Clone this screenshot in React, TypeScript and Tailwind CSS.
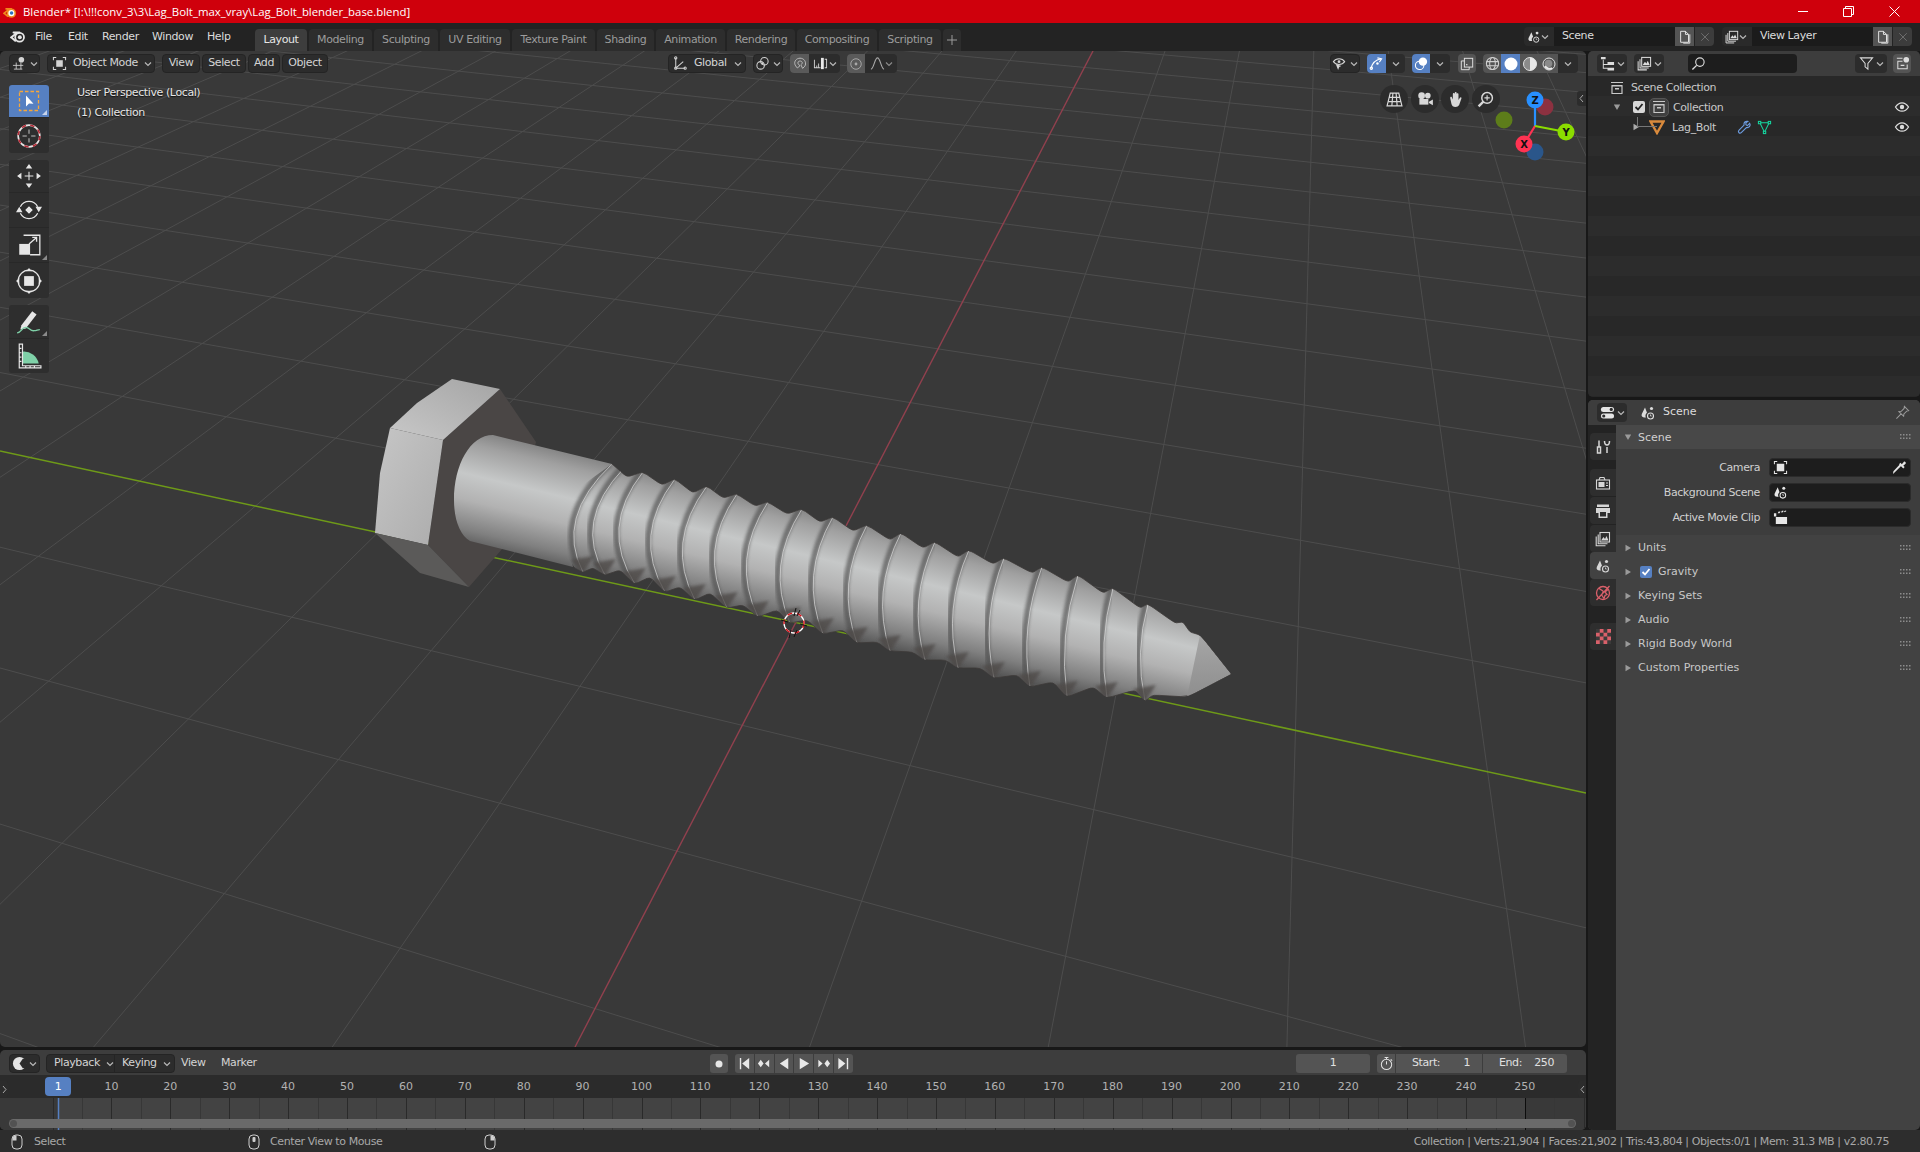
import React from "react";

type IconProps = { s?: number; className?: string; children?: React.ReactNode };

const Ic = ({ s = 16, className = "", children }: IconProps) => (
  <svg viewBox="0 0 16 16" width={s} height={s} fill="none" stroke="currentColor" strokeWidth={1.1} className={`shrink-0 ${className}`}>
    {children}
  </svg>
);

const Chev = ({ className = "text-[#b8b8b8]" }: { className?: string }) => (
  <svg viewBox="0 0 8 8" width={8} height={8} fill="none" stroke="currentColor" strokeWidth={1.2} className={`shrink-0 ${className}`}>
    <path d="M1 2.5 4 5.5 7 2.5" />
  </svg>
);

const Tri = ({ down = false, className = "text-[#9a9a9a]" }: { down?: boolean; className?: string }) => (
  <svg viewBox="0 0 8 8" width={8} height={8} fill="currentColor" className={`shrink-0 ${className}`}>
    {down ? <path d="M.8 1.5h6.4L4 7z" /> : <path d="M1.5 .8v6.4L7 4z" />}
  </svg>
);

const Logo = ({ s = 16, orange = false }: { s?: number; orange?: boolean }) => (
  <svg viewBox="0 0 16 16" width={s} height={s} fill="none" className="shrink-0">
    <path d="M1 9.5 6.5 5.2M3.5 4.5h6M1.5 9.5l3.7 3.3" stroke={orange ? "#f08a1d" : "#e6e6e6"} strokeWidth={1.9} strokeLinecap="round" />
    <circle cx={9.6} cy={9.3} r={4.4} stroke={orange ? "#f08a1d" : "#e6e6e6"} strokeWidth={1.8} fill={orange ? "#fff" : "none"} />
    <circle cx={9.8} cy={9.2} r={2} fill={orange ? "#2a6fc0" : "#e6e6e6"} />
  </svg>
);

const SceneIco = ({ s = 16 }: { s?: number }) => (
  <Ic s={s}>
    <path d="M5 2.5 1.8 9c-.8 2 .6 3.6 2.7 3.6.6 0 1 0 1.4-.2C5 11 5.4 9 7 7.8z" fill="currentColor" stroke="none" />
    <circle cx={11.5} cy={3.5} r={1.6} fill="currentColor" stroke="none" />
    <circle cx={10.5} cy={11} r={3} />
    <path d="M10.5 9.5V11h1.2" strokeWidth={0.8} />
  </Ic>
);

const LayerIco = ({ s = 16 }: { s?: number }) => (
  <Ic s={s}>
    <rect x={5} y={1.5} width={9.5} height={9.5} fill="none" />
    <path d="M6 9.5 8.5 6l1.5 2 1.5-3 2 4.5z" fill="currentColor" stroke="none" />
    <path d="M3.2 3.5v9.3h9.3M1.2 5.5v9.3h9.3" />
  </Ic>
);

const Collection = () => (
  <Ic>
    <path d="M2 2.5h12M3 6v7.5h10V6H3zM2.5 5.500h11" strokeWidth={1.2} />
    <rect x={6} y={8} width={4} height={1.5} fill="currentColor" stroke="none" />
  </Ic>
);

const Eye = () => (
  <Ic className="text-[#dcdcdc]">
    <path d="M1.5 8C3.5 4.8 5.8 3.8 8 3.8s4.500 1 6.500 4.200c-2 3.200-4.300 4.200-6.500 4.200S3.500 11.200 1.500 8z" strokeWidth={1.3} />
    <circle cx={8} cy={8} r={2.2} fill="currentColor" stroke="none" />
  </Ic>
);

const Grip = () => (
  <svg width={11} height={6} viewBox="0 0 11 6" fill="#8c8c8c" className="shrink-0">
    {[0, 3, 6, 9].map((x) => (
      <g key={x}>
        <rect x={x} y={0} width={1.5} height={1.5} />
        <rect x={x} y={3.5} width={1.5} height={1.5} />
      </g>
    ))}
  </svg>
);

const Mouse = ({ part }: { part: "l" | "m" | "r" }) => (
  <svg viewBox="0 0 12 16" width={12} height={16} fill="none" stroke="#cfcfcf" strokeWidth={1} className="shrink-0">
    <rect x={1} y={1} width={10} height={14} rx={4} />
    {part === "l" && <path d="M1.5 6.5V4a3 3 0 0 1 3-2.500h1v5z" fill="#cfcfcf" stroke="none" />}
    {part === "m" && <rect x={4.5} y={3} width={3} height={5} rx={1} fill="#cfcfcf" stroke="none" />}
    {part === "r" && <path d="M10.5 6.5V4a3 3 0 0 0-3-2.500h-1v5z" fill="#cfcfcf" stroke="none" />}
  </svg>
);

const menu: [string, string][] = [
  ["File", "w-[33px]"],
  ["Edit", "w-[34px]"],
  ["Render", "w-[50px]"],
  ["Window", "w-[55px]"],
  ["Help", "w-[48px]"],
];
const tabs: [string, string][] = [
  ["Layout", "w-[52px]"],
  ["Modeling", "w-[63px]"],
  ["Sculpting", "w-[64px]"],
  ["UV Editing", "w-[70px]"],
  ["Texture Paint", "w-[83px]"],
  ["Shading", "w-[57px]"],
  ["Animation", "w-[69px]"],
  ["Rendering", "w-[68px]"],
  ["Compositing", "w-[80px]"],
  ["Scripting", "w-[62px]"],
];

function TopBar() {
  return (
    <div className="h-[28px] bg-[#232323] flex items-start">
      <div className="w-[34px] h-[26px] flex items-center justify-center pl-[1px]">
        <Logo s={16} />
      </div>
      <div className="h-[26px] flex items-center pt-[2px] text-[#dcdcdc] ml-[1px] w-[220px]">
        {menu.map(([m, w]) => (
          <span key={m} className={w}>{m}</span>
        ))}
      </div>
      <div className="flex gap-[2px] mt-[6px] h-[22px]">
        {tabs.map(([t, w], i) => (
          <div key={t} className={`${w} h-[22px] rounded-t-[4px] flex items-center justify-center ${i === 0 ? "bg-[#3d3d3d] text-[#e6e6e6]" : "bg-[#2d2d2d] text-[#9c9c9c]"}`}>
            {t}
          </div>
        ))}
        <div className="w-[18px] h-[22px] rounded-t-[4px] bg-[#2d2d2d] text-[#9c9c9c] flex items-center justify-center">
          <svg width={10} height={10} viewBox="0 0 10 10" stroke="currentColor"><path d="M5 0v10M0 5h10" /></svg>
        </div>
      </div>
      <div className="ml-[563px] mt-[4px] flex h-[19px]">
        <div className="w-[30px] bg-[#2a2a2a] rounded-l-[4px] flex items-center pl-[3px] text-[#dcdcdc]">
          <SceneIco s={14} />
          <Chev />
        </div>
        <div className="w-[121px] bg-[#1b1b1b] text-[#dcdcdc] flex items-center pl-[8px]">Scene</div>
        <div className="w-[19px] bg-[#545454] flex items-center justify-center text-[#e6e6e6]">
          <Ic s={14}><path d="M3 1.5h5.500L12 5v9H3zM8.500 1.5V5H12M13.5 5v10H6" /></Ic>
        </div>
        <div className="w-[19px] ml-[1px] bg-[#3c3c3c] rounded-r-[4px] flex items-center justify-center text-[#777]">
          <Ic s={12}><path d="M3 3l10 10M13 3 3 13" /></Ic>
        </div>
      </div>
      <div className="ml-[8px] mt-[4px] flex h-[19px]">
        <div className="w-[30px] bg-[#2a2a2a] rounded-l-[4px] flex items-center pl-[3px] text-[#dcdcdc]">
          <LayerIco s={14} />
          <Chev />
        </div>
        <div className="w-[121px] bg-[#1b1b1b] text-[#dcdcdc] flex items-center pl-[8px]">View Layer</div>
        <div className="w-[19px] bg-[#545454] flex items-center justify-center text-[#e6e6e6]">
          <Ic s={14}><path d="M3 1.5h5.500L12 5v9H3zM8.500 1.5V5H12M13.5 5v10H6" /></Ic>
        </div>
        <div className="w-[19px] ml-[1px] bg-[#3c3c3c] rounded-r-[4px] flex items-center justify-center text-[#777]">
          <Ic s={12}><path d="M3 3l10 10M13 3 3 13" /></Ic>
        </div>
      </div>
    </div>
  );
}

const VP1 = { x: 1326, y: -400 };
const VP2 = { x: -3947, y: -400 };
const REF_Y = 1043;

// the ground grid runs off two vanishing points
function gridLines() {
  const out: string[] = [];
  for (let k = -22; k <= 10; k++) {
    if (k === 0) continue;
    const bx = 573 + 238 * k;
    const t = (1200 - VP1.y) / (REF_Y - VP1.y);
    const tTop = (0 - VP1.y) / (REF_Y - VP1.y);
    out.push(`M${VP1.x + (bx - VP1.x) * tTop} 0L${VP1.x + (bx - VP1.x) * t} 1200`);
  }
  for (let j = -5; j <= 24; j++) {
    if (j === 0) continue;
    const bx = 2746 + 680 * j;
    const slope = (REF_Y - VP2.y) / (bx - VP2.x);
    out.push(`M0 ${VP2.y + slope * (0 - VP2.x)}L1600 ${VP2.y + slope * (1600 - VP2.x)}`);
  }
  return out.join("");
}

const profile: number[][] = [
  [612, 464], [627, 477], [643, 472], [662, 485], [675, 479], [693, 493], [707, 486], [723, 498], [737, 494], [755, 506], [768, 502], [787, 514], [802, 509], [820, 522], [833, 517], [853, 531], [867, 525], [890, 540], [901, 533], [923, 548], [935, 542], [958, 557], [969, 550], [993, 564], [1004, 558], [1032, 573], [1042, 567], [1068, 582], [1078, 575], [1103, 593], [1113, 588], [1140, 608], [1148, 604], [1175, 623], [1183, 622], [1190, 632], [1200, 635], [1231, 674],
  [1187, 697], [1153, 695], [1145, 701], [1135, 690], [1107, 698], [1093, 687], [1067, 697], [1053, 682], [1030, 687], [1017, 675], [994, 678], [980, 668], [958, 668], [945, 660], [925, 660], [912, 652], [890, 651], [877, 642], [857, 643], [843, 630], [823, 634], [807, 620], [790, 623], [777, 610], [758, 617], [743, 605], [727, 608], [710, 593], [695, 600], [680, 587], [665, 592], [650, 577], [635, 584], [620, 570], [605, 575], [593, 568], [583, 572], [573, 567], [545, 512],
];

// round every corner of the outline, thread tips stay narrow
function roundedOutline(pts: number[][], f = 0.2) {
  let d = `M${pts[0][0]} ${pts[0][1]}`;
  for (let i = 1; i < pts.length - 1; i++) {
    const [x, y] = pts[i];
    const [px, py] = pts[i - 1];
    const [nx, ny] = pts[i + 1];
    const ff = x === 1231 ? 0.02 : f;
    d += `L${x + (px - x) * ff} ${y + (py - y) * ff}Q${x} ${y} ${x + (nx - x) * ff} ${y + (ny - y) * ff}`;
  }
  return `${d}L${pts[pts.length - 1][0]} ${pts[pts.length - 1][1]}Z`;
}

const outline = roundedOutline(profile);

const threads = [
  [612, 464, 583, 572],
  [624, 468, 605, 575],
  [643, 472, 635, 584],
  [675, 479, 665, 592],
  [707, 486, 695, 600],
  [737, 494, 727, 608],
  [768, 502, 758, 617],
  [802, 509, 790, 623],
  [833, 517, 823, 634],
  [867, 525, 857, 643],
  [901, 533, 890, 651],
  [935, 542, 925, 660],
  [969, 550, 958, 668],
  [1004, 558, 994, 678],
  [1042, 567, 1030, 687],
  [1078, 575, 1067, 697],
  [1113, 588, 1107, 698],
  [1148, 604, 1145, 701],
];

function threadPath(t: number[], shift = 0) {
  const mx = (t[0] + t[2]) / 2;
  const my = (t[1] + t[3]) / 2;
  const bulge = Math.max(12, 40 - (mx - 640) * 0.06);
  return `M${t[0] + shift} ${t[1]}Q${mx - bulge + shift} ${my} ${t[2] + shift} ${t[3]}`;
}

function Scene() {
  return (
    <svg viewBox="0 0 1586 996" width={1586} height={996} className="absolute inset-0">
      <g transform="translate(0 -51)">
        <defs>
          <linearGradient id="metal" gradientUnits="userSpaceOnUse" x1={613.5} y1={463.6} x2={586.5} y2={576.4}>
            <stop offset={0} stopColor="#858585" />
            <stop offset={0.12} stopColor="#a0a0a0" />
            <stop offset={0.38} stopColor="#c6c8c8" />
            <stop offset={0.6} stopColor="#b2b2b2" />
            <stop offset={0.85} stopColor="#808080" />
            <stop offset={1} stopColor="#565656" />
          </linearGradient>
          <linearGradient id="headSide" x1={0} y1={0} x2={1} y2={1}>
            <stop offset={0} stopColor="#c6c6c6" />
            <stop offset={1} stopColor="#acacac" />
          </linearGradient>
          <linearGradient id="headTop" x1={0} y1={1} x2={1} y2={0}>
            <stop offset={0} stopColor="#c8c8c8" />
            <stop offset={1} stopColor="#a4a4a4" />
          </linearGradient>
          <linearGradient id="cone" x1={0} y1={0} x2={0} y2={1}>
            <stop offset={0} stopColor="#a6a6a6" />
            <stop offset={1} stopColor="#8e8e8e" />
          </linearGradient>
          <clipPath id="shaftClip">
            <path d={outline} />
          </clipPath>
          <filter id="soft"><feGaussianBlur stdDeviation={1.5} /></filter>
        </defs>
        <path d={gridLines()} stroke="#4d4d4d" strokeWidth={1} fill="none" />
        <path d="M0 451L1586 793" stroke="#6e9a18" strokeWidth={1.5} />
        <path d="M575 1047L1093 51" stroke="#91404e" strokeWidth={1.4} />

        <polygon points="500,389 536,442 510,540 469,587 428,545 443,440" fill="#4a4645" />
        <polygon points="390,428 443,440 428,545 375,533 380,473" fill="url(#headSide)" />
        <polygon points="452,379 500,389 443,440 390,428 417,403" fill="url(#headTop)" />
        <polygon points="375,533 428,545 469,587 420,573" fill="#5b5a59" />

        <path d={outline} fill="url(#metal)" stroke="#3d3a39" strokeWidth={0.8} />
        <path d="M493 435C470 435 454 465 454 500C454 520 460 535 470 541L573 567C566 535 590 480 612 464Z" fill="url(#metal)" />
        <g clipPath="url(#shaftClip)">
          {threads.map((t) => (
            <g key={t[0]}>
              <path d={threadPath(t, -2.5)} stroke="#4c4c4c" strokeWidth={6} opacity={0.62} fill="none" filter="url(#soft)" />
              <path d={threadPath(t)} stroke="#e2e2e2" strokeWidth={1} opacity={0.65} fill="none" />
              <polygon points={`${t[2] - 12},${t[3] - 12} ${t[2]},${t[3] + 1} ${t[2] + 11},${t[3] - 16}`} fill="#4f4b4a" opacity={0.8} filter="url(#soft)" />
            </g>
          ))}
          <polygon points="1200,635 1231,674 1187,697" fill="url(#cone)" />
        </g>

        <g fill="none">
          <circle cx={794} cy={623} r={10} stroke="#fff" strokeWidth={1.3} />
          <circle cx={794} cy={623} r={10} stroke="#d8121a" strokeWidth={1.4} strokeDasharray="5 5" />
          <path d="M796 608l-2 8M800 610l-3 6M791 630l-2 8M797 630l-3 7M781 620l7 2M800 624l7 2" stroke="#111" strokeWidth={1} />
        </g>

        <circle cx={1545} cy={107} r={8.5} fill="#8c3140" />
        <circle cx={1504} cy={120} r={8.5} fill="#5d7d1a" />
        <circle cx={1535} cy={152} r={8.5} fill="#2a568a" />
        <path d="M1535 126V108" stroke="#2890ff" strokeWidth={2.2} />
        <path d="M1535 126L1524 144" stroke="#ff3352" strokeWidth={2.2} />
        <path d="M1535 126L1566 132" stroke="#8bdc00" strokeWidth={2.2} />
        <circle cx={1535} cy={100} r={8.5} fill="#2890ff" />
        <circle cx={1524} cy={144} r={8.5} fill="#ff3352" />
        <circle cx={1566} cy={132} r={8.5} fill="#8bdc00" />
        <g fontFamily="'DejaVu Sans', sans-serif" fontSize={10} fontWeight={700} fill="#111" textAnchor="middle">
          <text x={1535} y={104}>Z</text>
          <text x={1524} y={148}>X</text>
          <text x={1566} y={136}>Y</text>
        </g>
      </g>
    </svg>
  );
}

const HBtn = ({ w, children, className = "" }: { w: string; children: React.ReactNode; className?: string }) => (
  <div className={`${w} h-[19px] bg-[#2c2c2c] border border-[#242424] rounded-[4px] flex items-center justify-center gap-[3px] text-[#d4d4d4] whitespace-nowrap ${className}`}>
    {children}
  </div>
);

function ViewHeader() {
  return (
    <div className="flex h-[19px] mt-[3px] ml-[9px]">
      <HBtn w="w-[31px]">
        <Ic s={15}>
          <path d="M1 10h11M4.5 7v7M9.5 7v7M2 14h9" strokeWidth={0.9} />
          <circle cx={10} cy={4} r={3} fill="currentColor" stroke="none" />
        </Ic>
        <Chev />
      </HBtn>
      <HBtn w="w-[108px] ml-[7px]" className="!justify-start pl-[4px] gap-[6px]">
        <Ic s={15}>
          <rect x={4.5} y={4.5} width={7} height={7} fill="currentColor" stroke="none" />
          <path d="M1.5 4.500v-3h3M11.5 1.5h3v3M14.5 11.5v3h-3M4.5 14.5h-3v-3" />
        </Ic>
        <span className="flex-1">Object Mode</span>
        <Chev className="text-[#b8b8b8] mr-[3px]" />
      </HBtn>
      <HBtn w="w-[38px] ml-[7px]">View</HBtn>
      <HBtn w="w-[44px] ml-[2px]">Select</HBtn>
      <HBtn w="w-[32px] ml-[2px]">Add</HBtn>
      <HBtn w="w-[46px] ml-[2px]">Object</HBtn>

      <HBtn w="w-[78px] ml-[340px]" className="!justify-start pl-[3px] gap-[7px]">
        <Ic s={15}>
          <path d="M4 2v11h10M4 13l8-7" />
          <circle cx={4} cy={2} r={1.2} /><circle cx={14} cy={13} r={1.2} /><circle cx={4} cy={13} r={1.2} />
        </Ic>
        <span className="flex-1">Global</span>
        <Chev className="text-[#b8b8b8] mr-[3px]" />
      </HBtn>
      <HBtn w="w-[30px] ml-[7px]">
        <Ic s={15}>
          <circle cx={6} cy={10} r={4} />
          <circle cx={10} cy={5.5} r={4} />
          <circle cx={8} cy={8} r={1.2} fill="currentColor" stroke="none" />
        </Ic>
        <Chev />
      </HBtn>
      <div className="flex ml-[7px] h-[19px] w-[50px] bg-[#2c2c2c] rounded-[4px] overflow-hidden">
        <div className="w-[19px] bg-[#5a5a5a] flex items-center justify-center text-[#bdbdbd]">
          <Ic s={14}><path d="M11 13l2.500-2.500c2-3 .5-8-4-9-4-.8-8 2-7.500 6 .3 2 1.500 3.500 3 5L8 10C6 8.500 5 7 6 5.500c1.200-1.500 4-1 4.500.5.300 1.200-.300 2-1.500 3z" /></Ic>
        </div>
        <div className="flex-1 flex items-center justify-center gap-[1px] text-[#cfcfcf]">
          <svg viewBox="0 0 16 16" width={15} height={15} fill="currentColor" className="shrink-0">
            <path d="M1 4h1v9H1zM1 12h7v1H1zM3.500 10h1v2h-1zM5.500 8h1v4h-1z" />
            <rect x={8.5} y={2} width={3} height={12} fill="#e8e8e8" />
            <path d="M12.500 3H15v10h-2.500v-1H14V4h-1.500z" />
          </svg>
          <Chev />
        </div>
      </div>
      <div className="flex ml-[7px] h-[19px] w-[50px] bg-[#2c2c2c] rounded-[4px] overflow-hidden">
        <div className="w-[18px] bg-[#5a5a5a] flex items-center justify-center text-[#a8a8a8]">
          <Ic s={14}><circle cx={8} cy={8} r={6} /><circle cx={8} cy={8} r={1.6} fill="currentColor" stroke="none" /></Ic>
        </div>
        <div className="flex-1 flex items-center justify-center text-[#a8a8a8]">
          <Ic s={15}><path d="M1 14C4 14 5 2 8 2s4 12 7 12" /></Ic>
          <Chev className="text-[#8a8a8a]" />
        </div>
      </div>

      <HBtn w="w-[30px] ml-[433px]">
        <Ic s={15}>
          <path d="M1.500 6C3 3.800 5 3 7.500 3s4.500.8 6 3c-1.500 2.200-3.500 3-6 3s-4.500-.8-6-3z" />
          <circle cx={7.5} cy={6} r={1.5} fill="currentColor" stroke="none" />
          <path d="M4 8.500l6 2.200-2.300 1L6.500 15z" fill="currentColor" stroke="none" />
        </Ic>
        <Chev />
      </HBtn>
      <div className="flex ml-[7px] h-[19px] w-[38px] bg-[#2c2c2c] rounded-[4px] overflow-hidden">
        <div className="w-[19px] bg-[#5680c2] flex items-center justify-center text-white">
          <Ic s={15}><path d="M2 14C3 8 7 4 13 3M9 2l4.500 1L11 6.500" /><circle cx={2.5} cy={13} r={1.3} /><circle cx={9} cy={8} r={1.3} fill="currentColor" stroke="none" /></Ic>
        </div>
        <div className="flex-1 flex items-center justify-center"><Chev /></div>
      </div>
      <div className="flex ml-[7px] h-[19px] w-[38px] bg-[#2c2c2c] rounded-[4px] overflow-hidden">
        <div className="w-[18px] bg-[#5680c2] flex items-center justify-center text-white">
          <Ic s={15}><circle cx={6} cy={10} r={4.5} /><circle cx={9.5} cy={6} r={4.5} fill="currentColor" stroke="none" /></Ic>
        </div>
        <div className="flex-1 flex items-center justify-center"><Chev /></div>
      </div>
      <div className="ml-[8px] w-[18px] h-[19px] bg-[#545454] rounded-[4px] flex items-center justify-center text-[#e0e0e0]">
        <Ic s={14}><rect x={5} y={1.5} width={9.5} height={10} /><path d="M5 4.500H1.500v10h9V11.500" /><rect x={7} y={8} width={1.5} height={1.5} fill="currentColor" stroke="none" /></Ic>
      </div>
      <div className="flex ml-[7px] h-[19px] w-[95px] bg-[#2c2c2c] rounded-[4px] overflow-hidden">
        <div className="w-[18px] bg-[#545454] flex items-center justify-center text-[#d0d0d0]">
          <Ic s={15}><circle cx={8} cy={8} r={6.5} /><ellipse cx={8} cy={8} rx={3} ry={6.5} /><path d="M1.500 6h13M1.500 10.500h13" /></Ic>
        </div>
        <div className="w-[19px] bg-[#5680c2] flex items-center justify-center">
          <svg width={14} height={14} viewBox="0 0 14 14"><circle cx={7} cy={7} r={6.5} fill="#fff" /></svg>
        </div>
        <div className="w-[19px] bg-[#545454] flex items-center justify-center">
          <svg width={14} height={14} viewBox="0 0 14 14"><circle cx={7} cy={7} r={6.5} fill="#8a8a8a" stroke="#e0e0e0" /><path d="M7 .5a6.500 6.500 0 0 1 0 13z" fill="#e8e8e8" /></svg>
        </div>
        <div className="w-[19px] bg-[#545454] flex items-center justify-center">
          <svg width={14} height={14} viewBox="0 0 14 14" fill="none"><circle cx={7} cy={7} r={6} stroke="#e0e0e0" /><circle cx={6.5} cy={6.5} r={3.8} fill="#8a8a8a" /><path d="M3 9a5 5 0 0 0 7 2" stroke="#e8e8e8" strokeWidth={2} /></svg>
        </div>
        <div className="flex-1 flex items-center justify-center"><Chev /></div>
      </div>
    </div>
  );
}

const Tool = ({ children, active = false, corner = false, h = "h-[34px]" }: { children: React.ReactNode; active?: boolean; corner?: boolean; h?: string }) => (
  <div className={`relative ${h} flex items-center justify-center border-b border-[#282828] last:border-b-0 text-[#e4e4e4] ${active ? "bg-[#5680c2]" : ""}`}>
    {children}
    {corner && (
      <svg width={5} height={5} viewBox="0 0 5 5" className="absolute right-[2px] bottom-[2px]" fill={active ? "#c8d4ea" : "#8a8a8a"}>
        <path d="M5 0v5H0z" />
      </svg>
    )}
  </div>
);

function ToolBar() {
  return (
    <div className="w-[40px] flex flex-col gap-[7px]">
      <div className="bg-[#2e2e2e] rounded-[3px] overflow-hidden">
        <Tool active corner h="h-[33px]">
          <svg viewBox="0 0 24 24" width={24} height={24} fill="none">
            <rect x={2.5} y={2.5} width={19} height={19} stroke="#f5a63b" strokeWidth={1.3} strokeDasharray="3.500 2" />
            <path d="M9 6.500v11l3-3 4.500.2z" fill="#fff" />
          </svg>
        </Tool>
        <Tool h="h-[35px]">
          <svg viewBox="0 0 24 24" width={26} height={26} fill="none">
            <circle cx={12} cy={12} r={10} stroke="#e6e6e6" strokeWidth={1.5} />
            <circle cx={12} cy={12} r={10} stroke="#b42c38" strokeWidth={1.5} strokeDasharray="4 4" />
            <path d="M12 6v4M12 14v4M6 12h4M14 12h4" stroke="#bdbdbd" strokeWidth={1} />
          </svg>
        </Tool>
      </div>
      <div className="bg-[#2e2e2e] rounded-[3px] overflow-hidden">
        <Tool h="h-[33px]">
          <svg viewBox="0 0 24 24" width={26} height={26} fill="#e6e6e6" stroke="#e6e6e6">
            <path d="M12 1l3 4H9zM12 23l-3-4h6zM1 12l4-3v6zM23 12l-4 3V9z" stroke="none" />
            <path d="M12 8v8M8 12h8" strokeWidth={1} />
          </svg>
        </Tool>
        <Tool h="h-[35px]">
          <svg viewBox="0 0 24 24" width={26} height={26} fill="none" stroke="#e6e6e6" strokeWidth={1.2}>
            <path d="M4 9a9 9 0 0 1 16 0M20 15a9 9 0 0 1-16 0" />
            <path d="M12 8.500l3.500 3.500-3.500 3.500L8.500 12zM0 14l3-5 3 5zM18 9l3 5 3-5z" fill="#e6e6e6" stroke="none" />
          </svg>
        </Tool>
        <Tool corner h="h-[35px]">
          <svg viewBox="0 0 24 24" width={26} height={26} fill="none" stroke="#e6e6e6" strokeWidth={1.2}>
            <path d="M7 3h15v18h-9" />
            <rect x={3} y={11} width={10} height={10} fill="#e6e6e6" stroke="none" />
            <path d="M12 11l7-6M15 5h4v4" />
          </svg>
        </Tool>
        <Tool h="h-[35px]">
          <svg viewBox="0 0 24 24" width={26} height={26} fill="none" stroke="#e6e6e6" strokeWidth={1.2}>
            <circle cx={12} cy={12} r={10} />
            <rect x={7.5} y={7.5} width={9} height={9} fill="#e6e6e6" stroke="none" />
            <path d="M12 0l2.500 3h-5zM12 24l-2.500-3h5zM0 12l3-2.500v5zM24 12l-3 2.500v-5z" fill="#e6e6e6" stroke="none" />
          </svg>
        </Tool>
      </div>
      <div className="bg-[#2e2e2e] rounded-[3px] overflow-hidden">
        <Tool corner>
          <svg viewBox="0 0 24 24" width={26} height={26} fill="none">
            <path d="M5 15 15 2l4 3L9 18l-5 1z" fill="#e6e6e6" />
            <path d="M1 22c4 0 4-5 8-5s4 4 8 3c2 0 3-1 5-1" stroke="#7fd1a8" strokeWidth={1.3} />
          </svg>
        </Tool>
        <Tool>
          <svg viewBox="0 0 24 24" width={26} height={26} fill="none">
            <path d="M6 19V8a14 14 0 0 1 15 11z" fill="#7fd1a8" />
            <path d="M3 1h3v20h17v2H3zM3 5h2M3 9h2M3 13h2M3 17h2M9 21v2M13 21v2M17 21v2" stroke="#e6e6e6" strokeWidth={1.1} />
          </svg>
        </Tool>
      </div>
    </div>
  );
}

const NavCircle = ({ children }: { children: React.ReactNode }) => (
  <div className="w-[28px] h-[28px] rounded-full bg-[#2c2c2c] flex items-center justify-center text-[#d8d8d8]">{children}</div>
);

function NavButtons() {
  return (
    <div className="absolute left-[1380px] top-[34px] flex gap-[2.6px]">
      <NavCircle>
        <Ic s={17}><path d="M4 2h8l3 12H1zM6.500 2l-1 12M9.500 2l1 12M3 6h10M2 10h12" /></Ic>
      </NavCircle>
      <NavCircle>
        <Ic s={18}>
          <circle cx={5} cy={5} r={3} fill="currentColor" stroke="none" />
          <circle cx={10.5} cy={5} r={2.5} fill="currentColor" stroke="none" />
          <rect x={3} y={8} width={8} height={5} fill="currentColor" stroke="none" />
          <path d="M11.500 10.500 15 8.500v5l-3.500-2z" fill="currentColor" stroke="none" />
        </Ic>
      </NavCircle>
      <NavCircle>
        <svg viewBox="0 0 16 16" width={17} height={17} fill="currentColor">
          <path d="M3 6.500c0-1.500 1.600-1.500 1.800 0L5.500 8V3c0-1.400 1.700-1.400 1.800 0v4V2c0-1.400 1.800-1.400 1.800 0v5V3c0-1.300 1.700-1.300 1.700 0v5.500l1.200-2c.8-1.200 2-.4 1.500.7L11.500 13c-.8 1.600-2 2-3.500 2-2.200 0-3.300-1-3.800-2.800z" />
        </svg>
      </NavCircle>
      <NavCircle>
        <Ic s={17}>
          <circle cx={9.5} cy={6.5} r={5} strokeWidth={1.4} />
          <path d="M6 10 1.500 14.500" strokeWidth={2.2} />
          <path d="M9.500 4v5M7 6.500h5" />
        </Ic>
      </NavCircle>
    </div>
  );
}

function Viewport() {
  return (
    <div className="relative h-[996px] bg-[#393939] rounded-[5px] overflow-hidden">
      <Scene />
      <div className="relative">
        <ViewHeader />
        <div className="flex mt-[12px] ml-[9px]">
          <ToolBar />
          <div className="ml-[28px] -mt-[2px] text-[#e6e6e6] leading-[20px] [text-shadow:0_1px_1px_#111]">
            <div>User Perspective (Local)</div>
            <div>(1) Collection</div>
          </div>
        </div>
      </div>
      <NavButtons />
      <div className="absolute right-0 top-[40px] w-[9px] h-[15px] bg-[#2c2c2c] rounded-l-[3px] flex items-center justify-center text-[#a8a8a8]">
        <svg width={5} height={9} viewBox="0 0 5 9" fill="none" stroke="currentColor"><path d="M4 1 1 4.500 4 8" /></svg>
      </div>
    </div>
  );
}

const frames = Array.from({ length: 25 }, (_, i) => (i + 1) * 10);
const fx = (f: number) => 58.4 + (f - 1) * 5.89;

function Timeline() {
  const minor = Array.from({ length: 56 }, (_, i) => i * 5);
  return (
    <div className="relative flex-1 bg-[#3d3d3d] rounded-[5px] overflow-hidden">
      <div className="h-[25px] flex items-center pl-[9px] pt-[2px]">
        <div className="w-[31px] h-[19px] bg-[#2c2c2c] border border-[#242424] rounded-[4px] flex items-center justify-center gap-[2px] text-[#e4e4e4]">
          <svg width={15} height={15} viewBox="0 0 16 16"><circle cx={8} cy={8} r={7} fill="currentColor" /><path d="M8 8 11.500 3h4v10h-4z" fill="#2c2c2c" /></svg>
          <Chev />
        </div>
        <div className="ml-[6px] flex h-[19px] bg-[#2c2c2c] border border-[#242424] rounded-[4px] text-[#d4d4d4]">
          <div className="w-[68px] flex items-center pl-[7px] gap-[6px] border-r border-[#242424]">Playback <Chev /></div>
          <div className="w-[59px] flex items-center pl-[7px] gap-[6px]">Keying <Chev /></div>
        </div>
        <span className="ml-[6px] w-[40px] text-[#d4d4d4]">View</span>
        <span className="w-[37px] text-[#d4d4d4]">Marker</span>
        <div className="ml-[452px] w-[18px] h-[19px] bg-[#545454] rounded-[3px] flex items-center justify-center">
          <svg width={8} height={8} viewBox="0 0 8 8"><circle cx={4} cy={4} r={3.5} fill="#e6e6e6" /></svg>
        </div>
        <div className="ml-[7px] flex w-[118px] h-[19px] bg-[#545454] rounded-[3px] overflow-hidden divide-x divide-[#3d3d3d]">
          {[
            "M3 2h1.500v12H3zM13 2v12L5.500 8z",
            "M1 8l3-4 3 4-3 4zM8.500 8 13 4v8z",
            "M3 8l9-6v12z",
            "M4 2v12l10-6z",
            "M2.500 4v8l4.500-4zM12 4l3 4-3 4-3-4z",
            "M11.500 2H13v12h-1.500zM2.500 2v12L10 8z",
          ].map((d) => (
            <div key={d} className="flex-1 flex items-center justify-center">
              <svg viewBox="0 0 16 16" width={15} height={15} fill="#e8e8e8"><path d={d} /></svg>
            </div>
          ))}
        </div>
        <div className="ml-[443px] w-[74px] h-[19px] bg-[#545454] rounded-[3px] flex items-center justify-center text-[#e0e0e0]">1</div>
        <div className="ml-[7px] flex h-[19px] bg-[#545454] rounded-[3px] text-[#e0e0e0] divide-x divide-[#3d3d3d]">
          <div className="w-[19px] flex items-center justify-center">
            <Ic s={15}><circle cx={8} cy={9} r={5.5} /><path d="M8 9V5.500M6 1.500h4M8 1.500v2M12.500 3.500l1.500 1.500" /></Ic>
          </div>
          <div className="w-[87px] flex items-center justify-between pl-[16px] pr-[12px]"><span>Start:</span><span>1</span></div>
          <div className="w-[84px] flex items-center justify-between pl-[16px] pr-[13px]"><span>End:</span><span>250</span></div>
        </div>
      </div>
      <div className="h-[23px] bg-[#2b2b2b] flex items-center pt-[2px] pl-[82px] text-[#b2b2b2] tracking-normal">
        {frames.map((f) => (
          <span key={f} className="w-[58.9px] text-center shrink-0">{f}</span>
        ))}
      </div>
      <svg width={1586} height={32} className="block">
        <rect width={1586} height={32} fill="#393939" />
        <rect x={fx(1)} width={fx(250) - fx(1)} height={32} fill="#434343" />
        {minor.map((f) => (
          <path key={f} d={`M${Math.round(fx(f)) + 0.5} 0v32`} stroke={f % 10 === 0 ? "#2a2a2a" : "#373737"} />
        ))}
        <path d={`M${Math.round(fx(250)) + 0.5} 0v32`} stroke="#0d0d0d" />
        <path d="M58.500 0v32" stroke="#5680c2" strokeWidth={1.5} />
      </svg>
      <div className="absolute left-[45px] top-[27px] w-[26px] h-[19px] pt-[1px] bg-[#5680c2] rounded-[4px] text-white flex items-center justify-center">1</div>
      <div className="absolute left-[9px] right-[10px] bottom-[2px] h-[9px] rounded-full bg-[#6a6a6a] flex items-center justify-between px-[1px]">
        <span className="w-[7px] h-[7px] rounded-full bg-[#525252]" />
        <span className="w-[7px] h-[7px] rounded-full bg-[#525252]" />
      </div>
      <div className="absolute left-0 top-[31px] w-[8px] h-[16px] bg-[#2c2c2c] rounded-r-[3px] flex items-center justify-center text-[#a8a8a8]">
        <svg width={5} height={9} viewBox="0 0 5 9" fill="none" stroke="currentColor"><path d="M1 1l3 3.500L1 8" /></svg>
      </div>
      <div className="absolute right-0 top-[31px] w-[8px] h-[16px] bg-[#2c2c2c] rounded-l-[3px] flex items-center justify-center text-[#a8a8a8]">
        <svg width={5} height={9} viewBox="0 0 5 9" fill="none" stroke="currentColor"><path d="M4 1 1 4.500 4 8" /></svg>
      </div>
    </div>
  );
}

function Outliner() {
  const rows = Array.from({ length: 17 }, (_, i) => i);
  return (
    <div className="h-[346px] bg-[#282828] rounded-[5px] overflow-hidden flex flex-col">
      <div className="h-[25px] bg-[#3d3d3d] flex items-center pl-[9px] shrink-0 text-[#dcdcdc]">
        <div className="w-[30px] h-[19px] bg-[#2c2c2c] rounded-[4px] flex items-center justify-center gap-[2px]">
          <svg width={15} height={15} viewBox="0 0 16 16" fill="currentColor"><path d="M1 1h5v2.500H1zM8 6.500h7v3H8zM8 12.500h7v3H8zM3 4v9.500h5v-1H4v-3h4v-1H4V4z" /></svg>
          <Chev />
        </div>
        <div className="ml-[7px] w-[30px] h-[19px] bg-[#2c2c2c] rounded-[4px] flex items-center justify-center gap-[2px]">
          <LayerIco s={15} />
          <Chev />
        </div>
        <div className="ml-[24px] w-[109px] h-[19px] bg-[#1d1d1d] rounded-[4px] flex items-center pl-[3px]">
          <Ic s={15}><circle cx={9.5} cy={6.5} r={4.5} strokeWidth={1.2} /><path d="M6 10 1.500 14.500" strokeWidth={1.5} /></Ic>
        </div>
        <div className="ml-[58px] w-[32px] h-[19px] bg-[#2c2c2c] rounded-[4px] flex items-center justify-center gap-[2px]">
          <Ic s={15}><path d="M1.500 2h13L9.500 8v6l-3-2.500V8z" /></Ic>
          <Chev />
        </div>
        <div className="ml-[6px] w-[18px] h-[19px] bg-[#545454] rounded-[4px] flex items-center justify-center">
          <Ic s={15}><path d="M2 2.500h6M3 6v7.500h10V9M2.500 5.500H8M6 10h4" /><circle cx={12} cy={4} r={3} fill="currentColor" stroke="none" /></Ic>
        </div>
      </div>
      <div className="relative flex-1">
        {rows.map((i) => (
          <div key={i} className={`h-[20px] ${i % 2 === 0 ? "bg-[#282828]" : "bg-[#2c2c2c]"}`} />
        ))}
        <div className="absolute inset-0 flex flex-col text-[#c8c8c8]">
          <div className="h-[21px] flex items-center pl-[21px] gap-[6px]">
            <span className="mt-[2px]"><Collection /></span>
            <span className="mt-[4px]">Scene Collection</span>
          </div>
          <div className="h-[20px] flex items-center relative">
            <span className="ml-[25px]"><Tri down /></span>
            <span className="ml-[12px] w-[12px] h-[12px] rounded-[2px] bg-[#d8d8d8] flex items-center justify-center">
              <svg width={10} height={10} viewBox="0 0 10 10" fill="none" stroke="#222" strokeWidth={1.8}><path d="M1.500 5 4 7.500 8.500 2" /></svg>
            </span>
            <span className="ml-[4px] w-[20px] h-[19px] bg-[#3f3f3f] rounded-[5px] border border-[#565656] flex items-center justify-center">
              <Collection />
            </span>
            <span className="ml-[4px] mt-[2px]">Collection</span>
            <span className="absolute right-[10px] top-[2px]"><Eye /></span>
          </div>
          <div className="h-[20px] flex items-center relative">
            <span className="absolute left-[49px] top-0 h-[10px] w-[20px] border-l border-b border-[#777]" />
            <span className="ml-[44px]"><Tri className="text-[#aaaaaa]" /></span>
            <span className="ml-[9px] text-[#d98a3c]">
              <svg width={16} height={16} viewBox="0 0 16 16" fill="none" stroke="currentColor" strokeWidth={2.4}><path d="M1.500 2.500h13L8 14z" /></svg>
            </span>
            <span className="ml-[7px] w-[65px] mt-[2px]">Lag_Bolt</span>
            <span className="text-[#6d9ce0]">
              <Ic s={15}><path d="M13.500 3.500 11 6 9.500 5 9.500 3l2-1.500C9 .8 7 2.500 7.500 5.500L2 11c-1.500 2 1 4 2.500 2.500L10 8c3 .5 5-2 3.500-4.500z" strokeWidth={1.2} /></Ic>
            </span>
            <span className="ml-[5px] text-[#16d6a0]">
              <Ic s={15}><path d="M3 3h10L8 13z" /><rect x={1.5} y={1.5} width={2.5} height={2.5} fill="#282828" /><rect x={12} y={1.5} width={2.5} height={2.5} fill="#282828" /><rect x={6.8} y={12} width={2.5} height={2.5} fill="#282828" /></Ic>
            </span>
            <span className="absolute right-[10px] top-[2px]"><Eye /></span>
          </div>
        </div>
      </div>
    </div>
  );
}

const PropTab = ({ active = false, children }: { active?: boolean; children: React.ReactNode }) => (
  <div className={`h-[27px] w-[26px] ml-[2px] rounded-l-[4px] flex items-center justify-center text-[#d6d6d6] ${active ? "bg-[#424242]" : "bg-[#2e2e2e]"}`}>
    {children}
  </div>
);

const sections = ["Units", "Gravity", "Keying Sets", "Audio", "Rigid Body World", "Custom Properties"];

function Field({ label, children }: { label: string; children: React.ReactNode }) {
  return (
    <div className="flex items-center h-[19px]">
      <span className="w-[153px] pr-[9px] pt-[2px] text-right text-[#d0d0d0] shrink-0">{label}</span>
      <div className="w-[142px] h-[19px] bg-[#1d1d1d] rounded-[4px] border border-[#2b2b2b] flex items-center justify-between px-[3px] text-[#e6e6e6]">
        {children}
      </div>
    </div>
  );
}

function Properties() {
  return (
    <div className="flex-1 bg-[#424242] rounded-[5px] overflow-hidden flex flex-col">
      <div className="h-[25px] bg-[#3d3d3d] flex items-center pl-[9px] text-[#dcdcdc] shrink-0">
        <div className="w-[30px] h-[19px] bg-[#2c2c2c] rounded-[4px] flex items-center justify-center gap-[2px] text-[#e4e4e4]">
          <svg width={15} height={15} viewBox="0 0 16 16" fill="currentColor"><rect x={1} y={2} width={14} height={5.5} rx={2.7} /><circle cx={12} cy={4.7} r={1.7} fill="#2c2c2c" /><rect x={1} y={9} width={14} height={5.5} rx={2.7} /><circle cx={4} cy={11.7} r={1.7} fill="#2c2c2c" /></svg>
          <Chev />
        </div>
        <span className="ml-[13px]"><SceneIco s={16} /></span>
        <span className="ml-[7px] tracking-normal">Scene</span>
        <span className="ml-auto mr-[10px] text-[#9a9a9a]">
          <Ic s={15}><path d="M10 1.500 14.500 6l-2 .5-3 3-.3 2.500-5-5 2.500-.3 3-3zM6.500 9.500 1.500 14.500" /></Ic>
        </span>
      </div>
      <div className="flex-1 flex">
        <div className="w-[28px] bg-[#232323] pt-[8px] flex flex-col shrink-0">
          <PropTab>
            <Ic s={16}><path d="M4 1.500v6M2.500 8h3v6h-3zM12 14V8M9.500 2c0 2 .5 4 2.500 4s2.500-2 2.500-4" strokeWidth={1.5} /></Ic>
          </PropTab>
          <div className="mt-[9px]">
            <PropTab>
              <Ic s={16}><rect x={1.5} y={5} width={13} height={9} /><path d="M4 5 5 2.500h4L10 5M11 8h2M11 10.500h2" /><rect x={3.5} y={7} width={6} height={5} fill="currentColor" stroke="none" /></Ic>
            </PropTab>
          </div>
          <div className="mt-[1px]">
            <PropTab>
              <svg viewBox="0 0 16 16" width={16} height={16} fill="currentColor"><path d="M2 1.500h12V4H2zM1 5h14v5h-2.500v5h-9v-5H1zM5 9v4.500h6V9z" fillRule="evenodd" /></svg>
            </PropTab>
          </div>
          <div className="mt-[1px]"><PropTab><LayerIco s={16} /></PropTab></div>
          <PropTab active><SceneIco s={16} /></PropTab>
          <PropTab>
            <svg viewBox="0 0 16 16" width={16} height={16} fill="none" stroke="#d9606a" strokeWidth={1.3}>
              <circle cx={8} cy={8} r={6.5} />
              <path d="M4 3c1 2 3 1.500 4 3S6 9 7 10.500l2 3 1-3 2-1-2-2.500 3-2.500M1.500 15 14.500 1" />
            </svg>
          </PropTab>
          <div className="mt-[17px]">
            <PropTab>
              <svg viewBox="0 0 16 16" width={15} height={15}>
                <rect width={16} height={16} fill="#d9606a" />
                {[0, 1, 2, 3].flatMap((r) => [0, 1, 2, 3].map((c) => ((r + c) % 2 === 0 ? <rect key={`${r}${c}`} x={c * 4} y={r * 4} width={4} height={4} fill="#3a3a3a" /> : null)))}
              </svg>
            </PropTab>
          </div>
        </div>
        <div className="flex-1 flex flex-col">
          <div className="h-[24px] bg-[#484848] flex items-center pl-[8px] pr-[9px] text-[#d0d0d0]">
            <Tri down />
            <span className="ml-[6px] pt-[2px] tracking-normal">Scene</span>
            <span className="ml-auto"><Grip /></span>
          </div>
          <div className="h-[86px] bg-[#3d3d3d] pt-[9px] flex flex-col gap-[6px]">
            <Field label="Camera">
              <Ic s={15}>
                <rect x={4} y={4} width={8} height={8} fill="currentColor" stroke="none" />
                <path d="M1.500 4.500v-3h3M11.500 1.500h3v3M14.500 11.500v3h-3M4.500 14.500h-3v-3" />
              </Ic>
              <svg viewBox="0 0 16 16" width={15} height={15} fill="#e6e6e6"><path d="M10 6 3 13l-2 2 .5-3L8 5zM9 3l1.500 1.500 2-2.500c1-1 3 1 2 2l-2.500 2L13.500 7.500 12 9 7.500 4.500z" /></svg>
            </Field>
            <Field label="Background Scene">
              <SceneIco s={15} />
            </Field>
            <Field label="Active Movie Clip">
              <svg viewBox="0 0 16 16" width={15} height={15} fill="#e6e6e6" className="shrink-0"><path d="M3 7.500h12V15H3zM1 3.500h2.500V7H1zM5 3.500h2l1-2H6zM9 3l2-1 0-1.500-2 .5zM12 2.500l2-1V.500l-2 .5z" /></svg>
            </Field>
          </div>
          <div className="pt-[1px] flex flex-col">
            {sections.map((s) => (
              <div key={s} className="h-[24px] flex items-center pl-[8px] pr-[9px] text-[#c8c8c8] tracking-normal">
                <Tri />
                {s === "Gravity" && (
                  <span className="ml-[8px] w-[12px] h-[12px] rounded-[2px] bg-[#5680c2] flex items-center justify-center">
                    <svg width={10} height={10} viewBox="0 0 10 10" fill="none" stroke="#fff" strokeWidth={1.8}><path d="M1.500 5 4 7.500 8.500 2" /></svg>
                  </span>
                )}
                <span className="ml-[6px]">{s}</span>
                <span className="ml-auto"><Grip /></span>
              </div>
            ))}
          </div>
        </div>
      </div>
    </div>
  );
}

export default function App() {
  return (
    <div className="w-[1920px] h-[1152px] bg-[#181818] flex flex-col overflow-hidden font-['DejaVu_Sans',sans-serif] text-[11px] tracking-[-0.4px]">
      <div className="h-[23px] bg-[#cf000c] flex items-center text-white shrink-0">
        <span className="ml-[3px]"><Logo s={14} orange /></span>
        <span className="ml-[6px] text-[11.4px] tracking-normal font-['Open_Sans',sans-serif]">Blender* [I:\!!!conv_3\3\Lag_Bolt_max_vray\Lag_Bolt_blender_base.blend]</span>
        <span className="ml-auto w-[10px] h-[1px] bg-white mr-[35px]" />
        <svg width={11} height={11} viewBox="0 0 11 11" fill="none" stroke="#fff" className="mr-[35px]"><path d="M.5 2.500h8v8h-8zM2.500 2.500v-2h8v8h-2" /></svg>
        <svg width={11} height={11} viewBox="0 0 11 11" fill="none" stroke="#fff" className="mr-[20px]"><path d="M.5.500l10 10M10.500.500l-10 10" /></svg>
      </div>
      <TopBar />
      <div className="flex-1 flex gap-[2px] min-h-0">
        <div className="w-[1586px] flex flex-col gap-[3px]">
          <Viewport />
          <Timeline />
        </div>
        <div className="flex-1 flex flex-col gap-[3px]">
          <Outliner />
          <Properties />
        </div>
      </div>
      <div className="h-[22px] bg-[#2d2d2d] flex items-center pt-[2px] text-[#a8a8a8] shrink-0">
        <span className="ml-[11px]"><Mouse part="l" /></span>
        <span className="ml-[11px] w-[214px]">Select</span>
        <Mouse part="m" />
        <span className="ml-[10px] w-[214px]">Center View to Mouse</span>
        <Mouse part="r" />
        <span className="ml-auto mr-[31px]">Collection | Verts:21,904 | Faces:21,902 | Tris:43,804 | Objects:0/1 | Mem: 31.3 MB | v2.80.75</span>
      </div>
    </div>
  );
}
